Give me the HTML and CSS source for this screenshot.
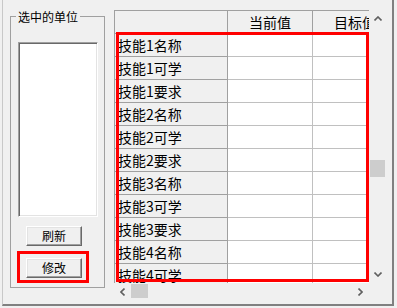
FILE: index.html
```html
<!DOCTYPE html>
<html lang="zh">
<head>
<meta charset="utf-8">
<link rel="stylesheet" href="styles.css">
</head>
<body>
<div class="frame">
  <fieldset class="group">
    <legend class="group-title">选中的单位</legend>
    <div class="group-body">
      <div class="listbox"></div>
      <button class="btn btn-refresh">刷新</button>
      <button class="btn btn-edit">修改</button>
    </div>
  </fieldset>
  <div class="gridwrap">
    <div class="viewport">
      <div class="table">
        <div class="cell fixed"></div><div class="cell fixed head">当前值</div><div class="cell fixed head">目标值</div>
        <div class="cell fixed label">技能1名称</div><div class="cell"></div><div class="cell"></div>
        <div class="cell fixed label">技能1可学</div><div class="cell"></div><div class="cell"></div>
        <div class="cell fixed label">技能1要求</div><div class="cell"></div><div class="cell"></div>
        <div class="cell fixed label">技能2名称</div><div class="cell"></div><div class="cell"></div>
        <div class="cell fixed label">技能2可学</div><div class="cell"></div><div class="cell"></div>
        <div class="cell fixed label">技能2要求</div><div class="cell"></div><div class="cell"></div>
        <div class="cell fixed label">技能3名称</div><div class="cell"></div><div class="cell"></div>
        <div class="cell fixed label">技能3可学</div><div class="cell"></div><div class="cell"></div>
        <div class="cell fixed label">技能3要求</div><div class="cell"></div><div class="cell"></div>
        <div class="cell fixed label">技能4名称</div><div class="cell"></div><div class="cell"></div>
        <div class="cell fixed label">技能4可学</div><div class="cell"></div><div class="cell"></div>
      </div>
    </div>
    <div class="vscroll">
      <div class="arrow"><svg width="8" height="5" viewBox="0 0 8 5"><polyline points="0.5,4.5 4,1 7.5,4.5" fill="none" stroke="#606060" stroke-width="1.6"/></svg></div>
      <div class="track"><div class="vthumb"></div></div>
      <div class="arrow"><svg width="8" height="5" viewBox="0 0 8 5"><polyline points="0.5,0.5 4,4 7.5,0.5" fill="none" stroke="#606060" stroke-width="1.6"/></svg></div>
    </div>
    <div class="hscroll">
      <div class="arrow"><svg width="5" height="8" viewBox="0 0 5 8"><polyline points="4.5,0.5 1,4 4.5,7.5" fill="none" stroke="#606060" stroke-width="1.6"/></svg></div>
      <div class="htrack"><div class="hthumb"></div></div>
      <div class="arrow"><svg width="5" height="8" viewBox="0 0 5 8"><polyline points="0.5,0.5 4,4 0.5,7.5" fill="none" stroke="#606060" stroke-width="1.6"/></svg></div>
    </div>
    <div class="corner"></div>
  </div>
</div>
<div class="mark mark-grid"></div>
<div class="mark mark-btn"></div>
</body>
</html>
```
FILE: styles.css
```css
html, body {
  margin: 0;
  padding: 0;
  background: #f0f0f0;
  overflow: hidden;
  font-family: "Noto Sans CJK SC", sans-serif;
  color: #000;
}
body {
  width: 397px;
  height: 308px;
  position: relative;
}
.frame {
  margin-left: 2px;
  width: 392px;
  height: 306px;
  box-sizing: border-box;
  border-left: 1px solid #c8c8c8;
  border-right: 2px solid #808080;
  border-bottom: 2px solid #808080;
  display: flex;
  align-items: flex-start;
}
.group {
  margin: 10px 0 0 7px;
  padding: 0;
  width: 95px;
  height: 278px;
  box-sizing: border-box;
  border: 1px solid #a0a0a0;
  min-width: 0;
}
.group-title {
  margin-left: 5px;
  padding: 0 2px;
  font-size: 12px;
  line-height: 13px;
}
.group-body {
  display: flex;
  flex-direction: column;
  align-items: flex-start;
}
.listbox {
  margin: 19px 0 0 7px;
  width: 80px;
  height: 175px;
  box-sizing: border-box;
  background: #fff;
  border: 1px solid;
  border-color: #a0a0a0 #fff #fff #a0a0a0;
  box-shadow: inset 1px 1px #696969, inset -1px -1px #e3e3e3;
}
.btn {
  margin-left: 15px;
  width: 56px;
  height: 20px;
  box-sizing: border-box;
  padding: 0;
  font-family: inherit;
  font-size: 12px;
  line-height: 16px;
  color: #000;
  background: #f0f0f0;
  border: 1px solid;
  border-color: #fff #696969 #696969 #fff;
  box-shadow: inset -1px -1px #a0a0a0, inset 1px 1px #e3e3e3;
}
.btn-refresh { margin-top: 9px; }
.btn-edit { margin-top: 12px; }
.gridwrap {
  margin: 10px 0 0 9px;
  display: grid;
  grid-template-columns: 255px 17px;
  grid-template-rows: 273px 17px;
}
.viewport {
  overflow: hidden;
  position: relative;
}
.table {
  display: grid;
  grid-template-columns: 113px 85px 85px;
  grid-auto-rows: 23px;
  border-top: 1px solid #a0a0a0;
  border-left: 1px solid #a0a0a0;
  width: max-content;
}
.cell {
  box-sizing: border-box;
  background: #fff;
  border-right: 1px solid #c0c0c0;
  border-bottom: 1px solid #c0c0c0;
  font-size: 14px;
  line-height: 22px;
  white-space: nowrap;
  overflow: hidden;
}
.cell.fixed {
  background: #f0f0f0;
  border-color: #a0a0a0;
}
.head { text-align: center; }
.label { padding-left: 3px; }
.vscroll {
  display: flex;
  flex-direction: column;
}
.arrow {
  width: 17px;
  height: 17px;
  display: flex;
  align-items: center;
  justify-content: center;
  flex: none;
}
.track { flex: 1; }
.vthumb {
  margin: 133px 0 0 1px;
  width: 15px;
  height: 17px;
  background: #cdcdcd;
}
.hscroll {
  display: flex;
}
.htrack { flex: 1; }
.hthumb {
  margin-top: 1px;
  width: 17px;
  height: 14px;
  background: #cdcdcd;
}
.corner { background: #f0f0f0; }
.mark {
  position: absolute;
  box-sizing: border-box;
  border: 3px solid #ff0000;
}
.mark-grid {
  left: 116px;
  top: 32px;
  width: 253px;
  height: 250px;
}
.mark-btn {
  left: 17px;
  top: 251px;
  width: 72px;
  height: 32px;
}
```
